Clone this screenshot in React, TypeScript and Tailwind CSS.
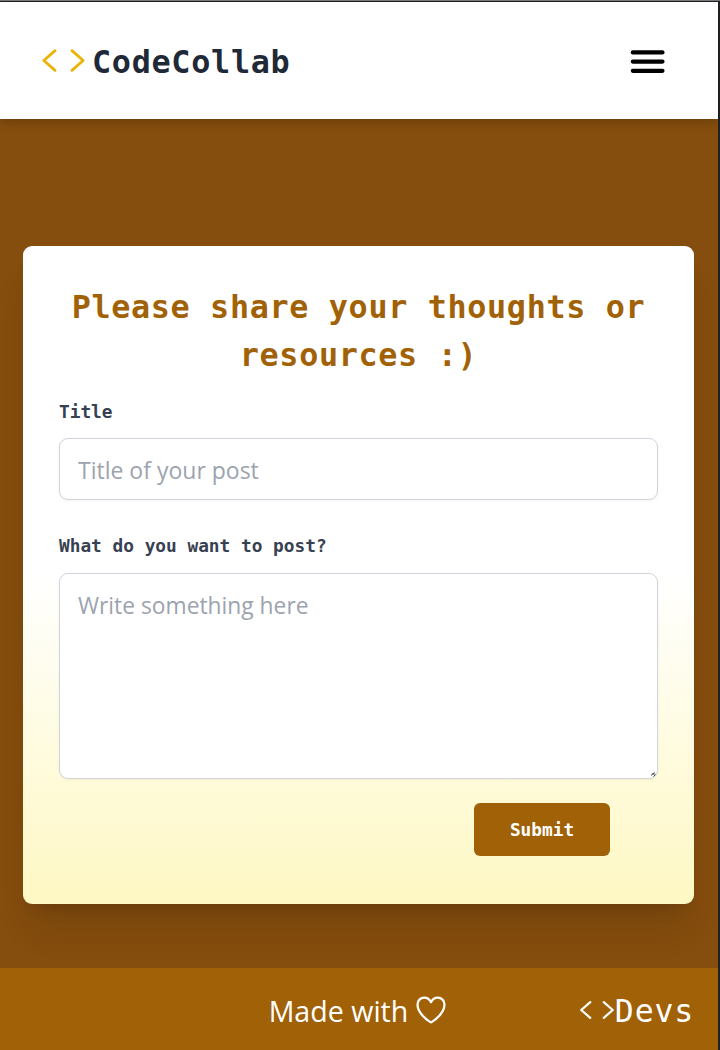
import React from "react";

function CodeIcon({ className }: { className: string }) {
  return (
    <svg
      viewBox="0 0 512 512"
      fill="none"
      stroke="currentColor"
      strokeWidth="32"
      strokeLinecap="round"
      strokeLinejoin="round"
      className={className}
    >
      <path d="M160 368L32 256l128-112M352 368l128-112-128-112" />
    </svg>
  );
}

function HeartIcon() {
  return (
    <svg
      viewBox="0 0 512 512"
      fill="none"
      stroke="currentColor"
      strokeWidth="32"
      strokeLinecap="round"
      strokeLinejoin="round"
      className="-ml-px size-9 shrink-0"
    >
      <path d="M352.92 80C288 80 256 144 256 144s-32-64-96.92-64c-52.76 0-94.54 44.14-95.08 96.81-1.1 109.33 86.73 187.08 183 252.42a16 16 0 0018 0c96.26-65.34 184.09-143.09 183-252.42-.54-52.67-42.32-96.81-95.08-96.81z" />
    </svg>
  );
}

function Header() {
  return (
    <header className="flex h-[117px] shrink-0 items-center justify-between bg-white pr-[52px] pl-[41px] shadow-[0_6px_9px_-1px_rgba(0,0,0,0.1),0_3px_6px_-2px_rgba(0,0,0,0.1)]">
      <a className="flex items-center gap-[6px]">
        <CodeIcon className="size-[45px] shrink-0 text-[#eab308]" />
        <span className="pt-0.5 font-['DejaVu_Sans_Mono',monospace] text-[31.8px] leading-[48px] font-bold tracking-[0.7px] text-[#1f2937]">
          CodeCollab
        </span>
      </a>
      <button aria-label="Menu" type="button">
        <svg
          viewBox="0 0 36 36"
          fill="none"
          stroke="#000"
          strokeWidth="4.2"
          strokeLinecap="round"
          className="size-9"
        >
          <path d="M2.8 9.4h29.7M2.8 18.6h29.7M2.8 27.8h29.7" />
        </svg>
      </button>
    </header>
  );
}

function PostForm() {
  return (
    <form className="mr-6 ml-[23px] flex h-[658px] flex-col rounded-[9px] bg-linear-to-b/srgb from-white via-white to-[#fef8c3] px-9 pt-[37px] pb-9 shadow-[0_30px_38px_-8px_rgba(0,0,0,0.1),0_12px_15px_-9px_rgba(0,0,0,0.15)]">
      <h1 className="text-center font-['DejaVu_Sans_Mono',monospace] text-[31.8px] leading-[48px] font-bold tracking-[0.64px] text-[#a16207]">
        Please share your thoughts or resources :)
      </h1>
      <label
        htmlFor="title"
        className="mt-[19px] font-['DejaVu_Sans_Mono',monospace] text-[17.8px] leading-[27px] font-bold text-[#374151]"
      >
        Title
      </label>
      <input
        id="title"
        placeholder="Title of your post"
        className="mt-[13px] h-[62px] w-full shrink-0 rounded-[9px] border border-[#d1d5db] bg-white px-[18px] pt-px font-['Open_Sans',sans-serif] text-[23px] shadow-[0_1px_3px_rgba(0,0,0,0.05)] placeholder:text-[#9ca3af]"
      />
      <label
        htmlFor="body"
        className="mt-8 font-['DejaVu_Sans_Mono',monospace] text-[17.8px] leading-[27px] font-bold text-[#374151]"
      >
        What do you want to post?
      </label>
      <div className="relative mt-[14px] shrink-0">
        <textarea
          id="body"
          placeholder="Write something here"
          className="block h-[206px] w-full resize-none rounded-[9px] border border-[#d1d5db] bg-white px-[18px] py-[14px] font-['Open_Sans',sans-serif] text-[22.8px] leading-9 shadow-[0_1px_3px_rgba(0,0,0,0.05)] placeholder:text-[#9ca3af]"
        />
        <svg
          viewBox="0 0 5 5"
          fill="none"
          stroke="#444"
          className="absolute right-[2px] bottom-[2px] size-[5px]"
        >
          <path d="M0 3.5l3.5-3M2.5 4.5l2-2M1 2h3" />
        </svg>
      </div>
      <button
        type="button"
        className="mt-6 mr-12 h-[53px] w-[136px] shrink-0 self-end rounded-md bg-[#a16207] pt-0.5 font-['DejaVu_Sans_Mono',monospace] text-[17.8px] font-bold text-white"
      >
        Submit
      </button>
    </form>
  );
}

function Footer() {
  return (
    <footer className="grid h-[82px] shrink-0 grid-cols-[1fr_auto_1fr] items-center bg-[#a16207] text-white">
      <span />
      <p className="flex items-center gap-1.5 pt-0.5 font-['Open_Sans',sans-serif] text-[28.6px] leading-[45px]">
        Made with
        <HeartIcon />
      </p>
      <div className="flex items-center justify-end pt-[2px] pr-6">
        <CodeIcon className="size-9 shrink-0" />
        <span className="pt-0.5 font-['DejaVu_Sans_Mono',monospace] text-[31.5px] leading-[48px] tracking-[0.82px]">
          Devs
        </span>
      </div>
    </footer>
  );
}

export default function App() {
  return (
    <div className="h-[1050px] w-[720px] overflow-hidden border-t border-[#77777a] bg-[#202124]">
      <div className="mt-px mr-0.5 flex h-[1048px] flex-col bg-[#854d0e]">
        <Header />
        <main className="flex flex-1 flex-col pt-[127px]">
          <PostForm />
        </main>
        <Footer />
      </div>
    </div>
  );
}
